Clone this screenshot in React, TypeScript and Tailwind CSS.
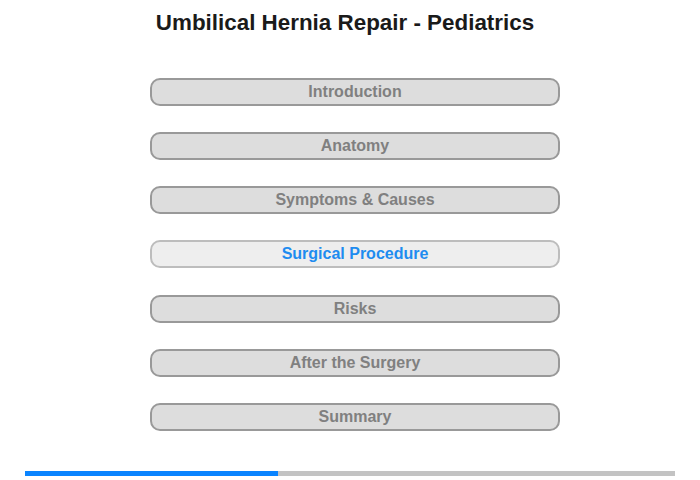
const sections = [
  'Introduction',
  'Anatomy',
  'Symptoms & Causes',
  'Surgical Procedure',
  'Risks',
  'After the Surgery',
  'Summary',
]

const active = 'Surgical Procedure'

export default function App() {
  return (
    <div className="h-[480px] w-[700px] bg-white font-['Liberation_Sans',Arial,sans-serif]">
      <h1 className="pt-[10px] pr-[10px] text-center text-[22.4px] font-bold leading-[26px] text-[#1a1a1a]">
        Umbilical Hernia Repair - Pediatrics
      </h1>

      <nav className="mt-[42px] flex flex-col gap-[26.17px] pl-[150px]">
        {sections.map(s => {
          const isActive = s === active
          return (
            <button
              key={s}
              className={
                isActive
                  ? 'h-[28px] w-[410px] rounded-[10px] border-2 border-[#bdbdbd] bg-[#eeeeee] text-[16px] font-bold leading-[24px] text-[#1e8cf0]'
                  : 'h-[28px] w-[410px] rounded-[10px] border-2 border-[#999999] bg-[#dddddd] text-[16px] font-bold leading-[24px] text-[#808080]'
              }
            >
              {s}
            </button>
          )
        })}
      </nav>

      <div className="mt-[40px] ml-[25px] flex h-[5px] w-[650px] bg-[#c3c3c3]">
        <div className="h-full w-[253px] bg-[#0a84ff]" />
      </div>
    </div>
  )
}
